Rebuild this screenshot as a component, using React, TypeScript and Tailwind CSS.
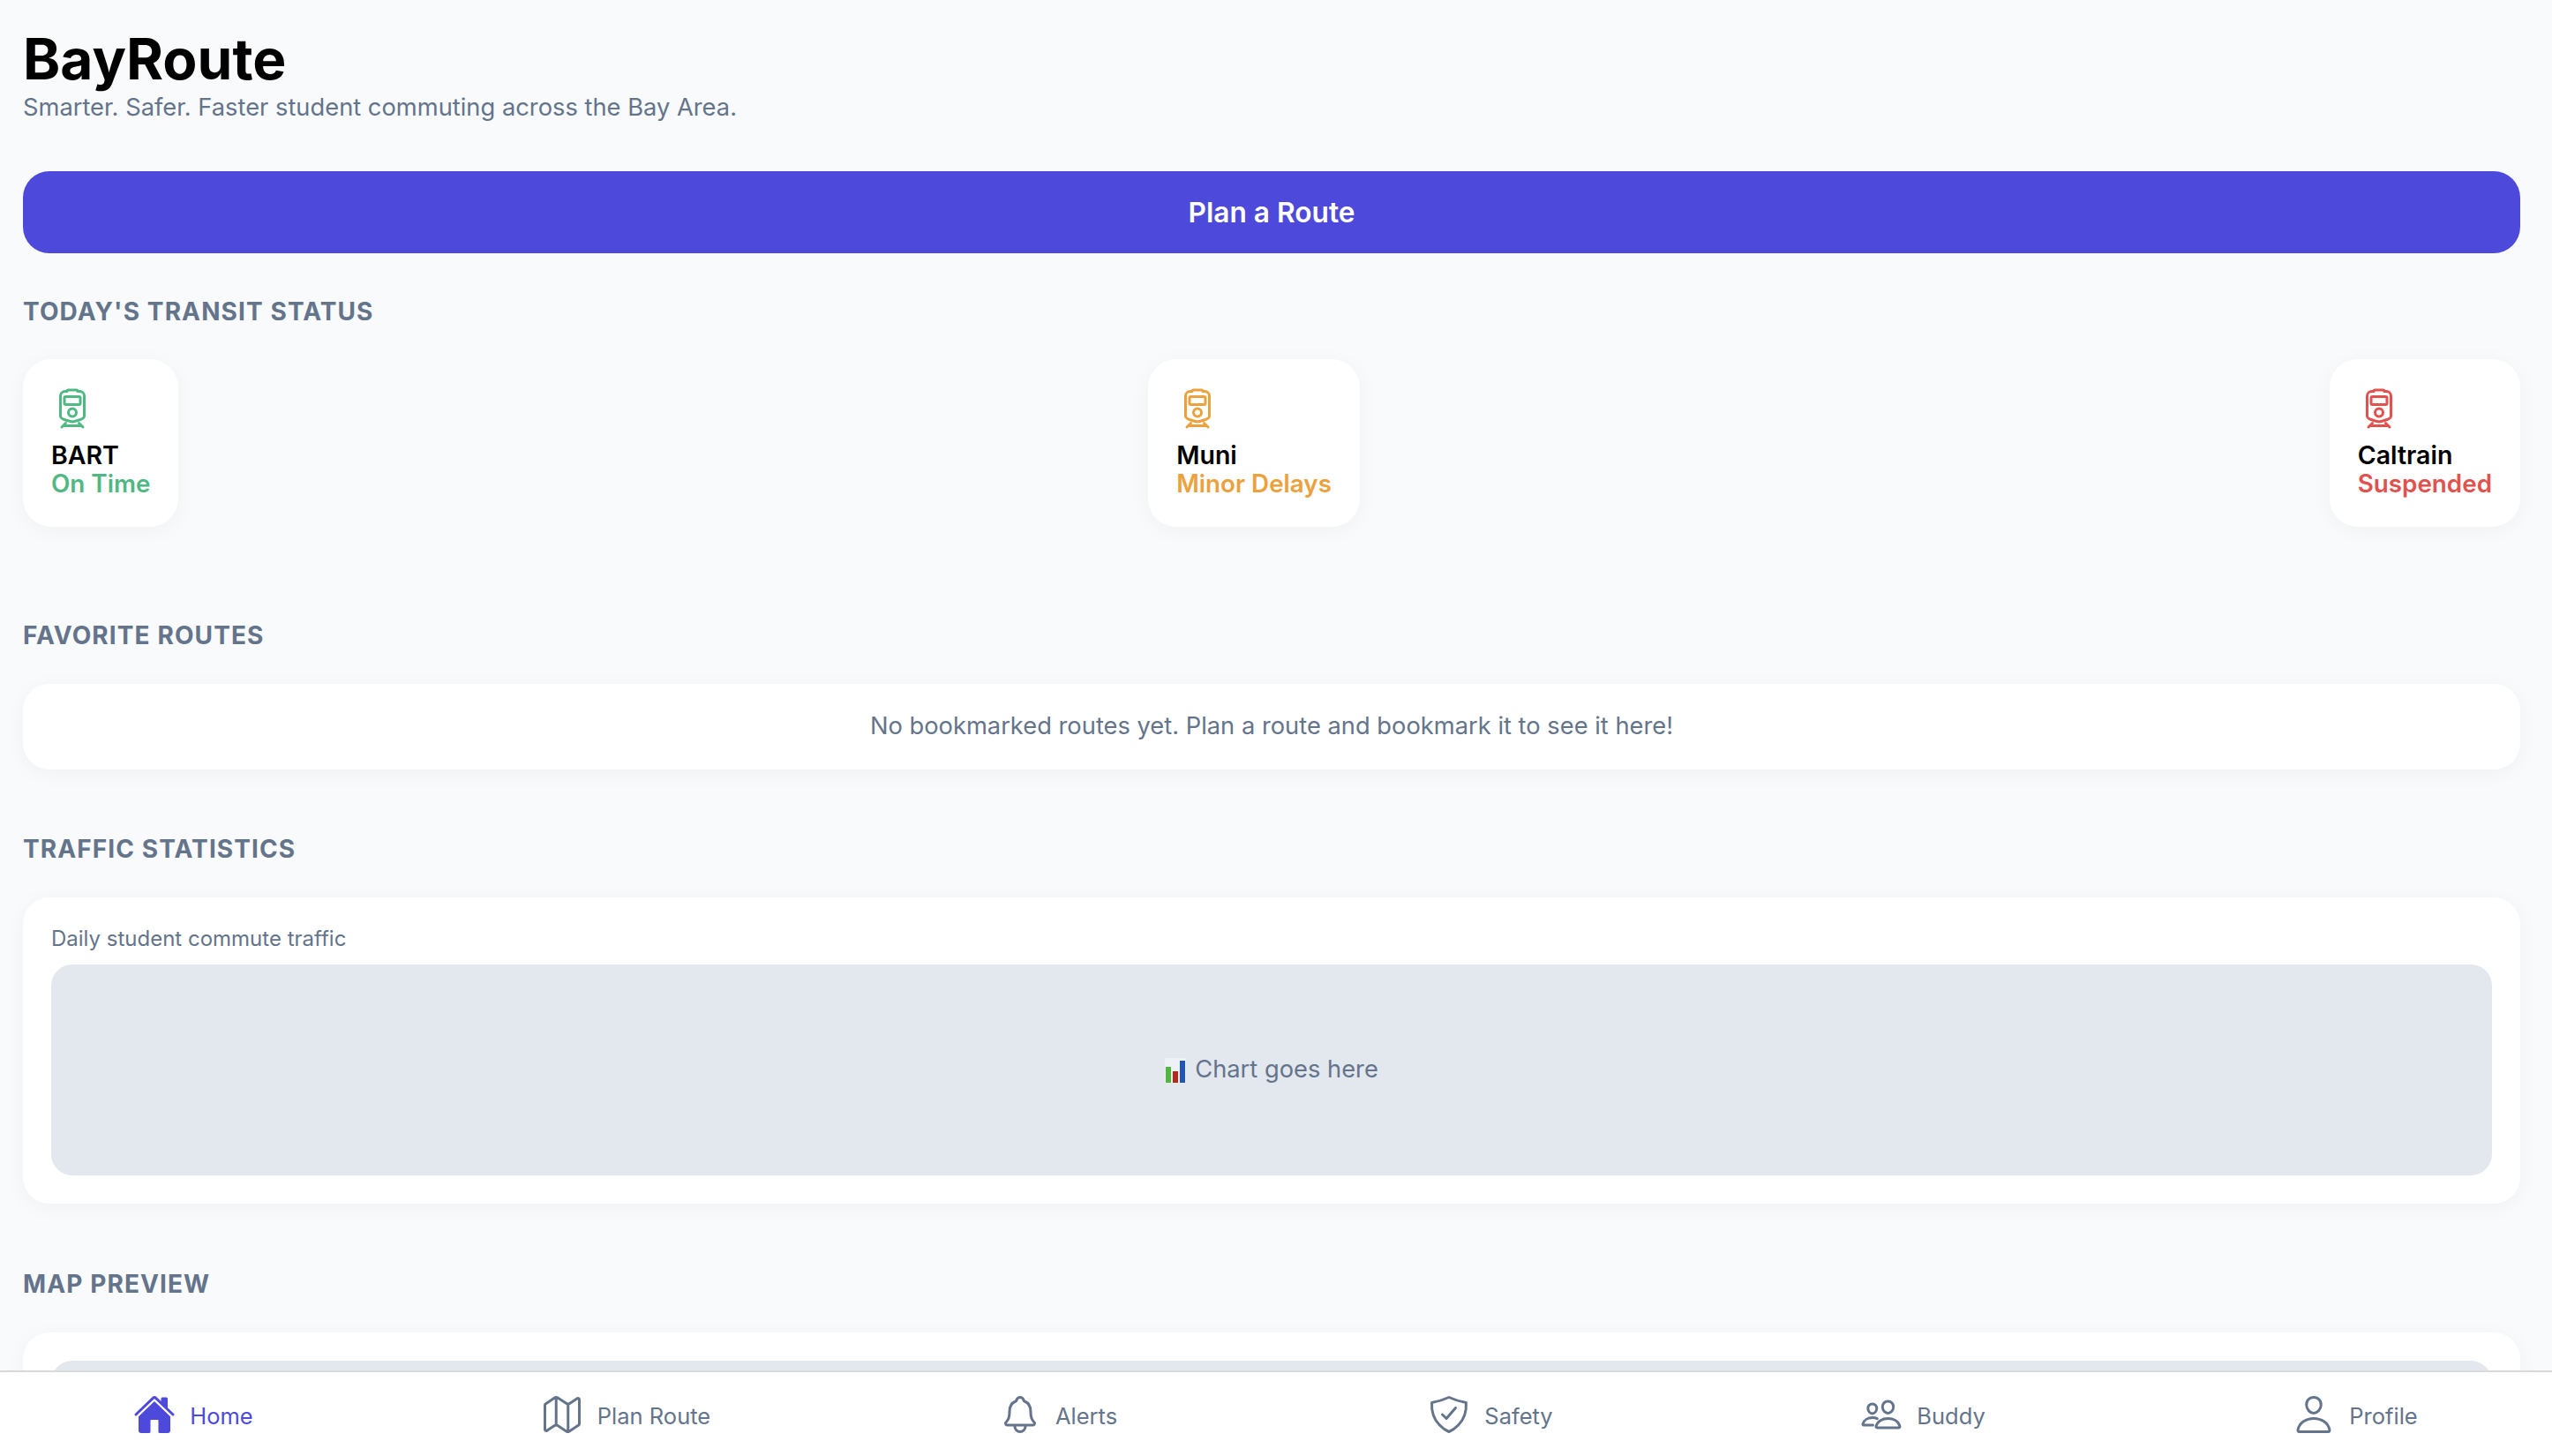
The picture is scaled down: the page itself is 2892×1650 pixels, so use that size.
import { IoHome, IoMapOutline, IoNotificationsOutline, IoPeopleOutline, IoPersonOutline, IoShieldCheckmarkOutline, IoTrainOutline } from 'react-icons/io5';

const statuses = [
    { name: 'BART', status: 'On Time', color: 'text-[#50b883]' },
    { name: 'Muni', status: 'Minor Delays', color: 'text-[#eca13d]' },
    { name: 'Caltrain', status: 'Suspended', color: 'text-[#e1524f]' },
];

const navItems = [
    { label: 'Home', Icon: IoHome, active: true },
    { label: 'Plan Route', Icon: IoMapOutline },
    { label: 'Alerts', Icon: IoNotificationsOutline },
    { label: 'Safety', Icon: IoShieldCheckmarkOutline },
    { label: 'Buddy', Icon: IoPeopleOutline },
    { label: 'Profile', Icon: IoPersonOutline },
];

function SectionTitle({ children }: { children: string }) {
    return (
        <h2 className="text-[28px] leading-[34px] font-bold tracking-[1.1px] uppercase text-[#64748b]">{children}</h2>
    );
}

export default function App() {
    return (
        <div className="h-[1650px] flex flex-col overflow-hidden bg-[#f8fafc] text-black font-['Inter',sans-serif]">
            <main className="flex-1 min-h-0 overflow-hidden pl-[26px] pr-[36px] pt-[34px]">
                <h1 className="text-[64px] leading-[66px] font-bold">BayRoute</h1>
                <p className="mt-[4px] text-[27.3px] leading-[36px] text-[#64748b]">Smarter. Safer. Faster student commuting across the Bay Area.</p>

                <button className="mt-[54px] w-full h-[93px] rounded-[30px] bg-[#4d49db] text-white text-[31.7px] font-semibold">
                    Plan a Route
                </button>

                <div className="mt-[49px]">
                    <SectionTitle>Today's Transit Status</SectionTitle>
                </div>
                <div className="mt-[37px] flex justify-between">
                    {statuses.map((s) => (
                        <div key={s.name} className="h-[190px] p-[32px] rounded-[32px] bg-white shadow-[0_4px_24px_rgba(0,0,0,0.04)]">
                            <IoTrainOutline className={`w-[48px] h-[48px] ${s.color}`} />
                            <div className="mt-[12px] text-[28.5px] leading-[33px] font-semibold">{s.name}</div>
                            <div className={`text-[27.8px] leading-[33px] font-semibold ${s.color}`}>{s.status}</div>
                        </div>
                    ))}
                </div>

                <div className="mt-[106px]">
                    <SectionTitle>Favorite Routes</SectionTitle>
                </div>
                <div className="mt-[38px] h-[97px] flex items-center justify-center rounded-[30px] bg-white text-[27.3px] text-[#64748b] shadow-[0_4px_24px_rgba(0,0,0,0.04)]">
                    No bookmarked routes yet. Plan a route and bookmark it to see it here!
                </div>

                <div className="mt-[73px]">
                    <SectionTitle>Traffic Statistics</SectionTitle>
                </div>
                <div className="mt-[38px] h-[347px] p-[32px] rounded-[30px] bg-white shadow-[0_4px_24px_rgba(0,0,0,0.04)]">
                    <p className="text-[24px] leading-[30px] text-[#64748b]">Daily student commute traffic</p>
                    <div className="mt-[14px] h-[239px] flex items-center justify-center gap-[10px] rounded-[24px] bg-[#e3e7ee] text-[27.3px] text-[#64748b]">
                        <svg viewBox="0 0 24 28" className="w-[24px] h-[28px]">
                            <rect width="24" height="28" fill="#eef1f5" />
                            <rect x="1" y="10" width="6" height="18" fill="#4fb83a" />
                            <rect x="9" y="15" width="6" height="13" fill="#b8281c" />
                            <rect x="17" y="3" width="6" height="25" fill="#1f56b8" />
                        </svg>
                        <span>Chart goes here</span>
                    </div>
                </div>

                <div className="mt-[74px]">
                    <SectionTitle>Map Preview</SectionTitle>
                </div>
                <div className="mt-[38px] h-[347px] p-[32px] rounded-[30px] bg-white shadow-[0_4px_24px_rgba(0,0,0,0.04)]">
                    <div className="h-[239px] rounded-[24px] bg-[#e3e7ee]" />
                </div>
            </main>

            <nav className="h-[97px] shrink-0 bg-white border-t-2 border-[#d9d9d9]">
                <div className="h-full grid grid-cols-6 -ml-[26px] -mr-[22px]">
                    {navItems.map(({ label, Icon, active }) => (
                        <div key={label} className={`flex items-center justify-center gap-[16px] ${active ? 'text-[#4d49db]' : 'text-[#64748b]'}`}>
                            <Icon className="w-[48px] h-[48px]" />
                            <span className="text-[25.5px] leading-[30px] mt-[4px]">{label}</span>
                        </div>
                    ))}
                </div>
            </nav>
        </div>
    );
}
